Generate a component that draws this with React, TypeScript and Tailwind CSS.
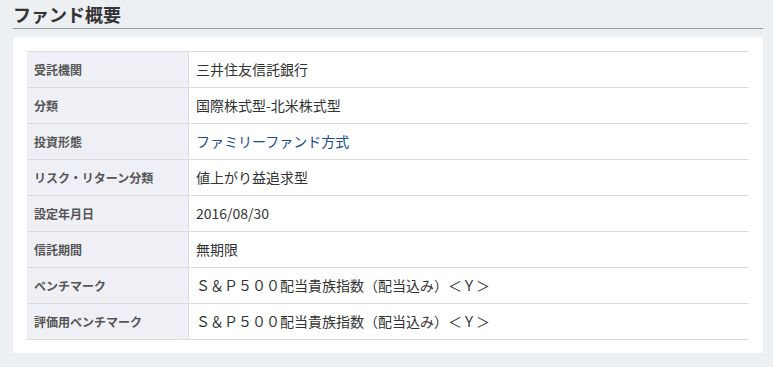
const rows: { label: string; value: string; link?: boolean }[] = [
  { label: "受託機関", value: "三井住友信託銀行" },
  { label: "分類", value: "国際株式型-北米株式型" },
  { label: "投資形態", value: "ファミリーファンド方式", link: true },
  { label: "リスク・リターン分類", value: "値上がり益追求型" },
  { label: "設定年月日", value: "2016/08/30" },
  { label: "信託期間", value: "無期限" },
  { label: "ベンチマーク", value: "Ｓ＆Ｐ５００配当貴族指数（配当込み）＜Ｙ＞" },
  { label: "評価用ベンチマーク", value: "Ｓ＆Ｐ５００配当貴族指数（配当込み）＜Ｙ＞" },
];

export default function App() {
  return (
    <div
      className="min-h-[367px] bg-[#edf0f3] pl-[13px] pt-[1px]"
      style={{ fontFamily: '"Noto Sans CJK JP", "Noto Sans", sans-serif' }}
    >
      <div className="w-[750px]">
        <h2 className="border-b border-[#999] text-[18px] font-bold leading-[27px] text-[#333]">
          ファンド概要
        </h2>
        <div className="mt-[8px] rounded-[3px] bg-white p-[14px] pb-[13px]">
          <div className="border-t border-[#dcdcdc]">
            {rows.map((r) => (
              <div key={r.label} className="flex h-[36px] border-b border-[#dcdcdc]">
                <div className="flex w-[162px] shrink-0 items-center border-r border-[#dcdcdc] bg-[#eef0f5] pl-[7px] text-[12px] font-bold text-[#555]">
                  {r.label}
                </div>
                <div
                  className={
                    "flex items-center pl-[7px] text-[14px] " +
                    (r.link ? "text-[#1a4a8f]" : "text-[#333]")
                  }
                >
                  {r.value}
                </div>
              </div>
            ))}
          </div>
        </div>
      </div>
    </div>
  );
}
